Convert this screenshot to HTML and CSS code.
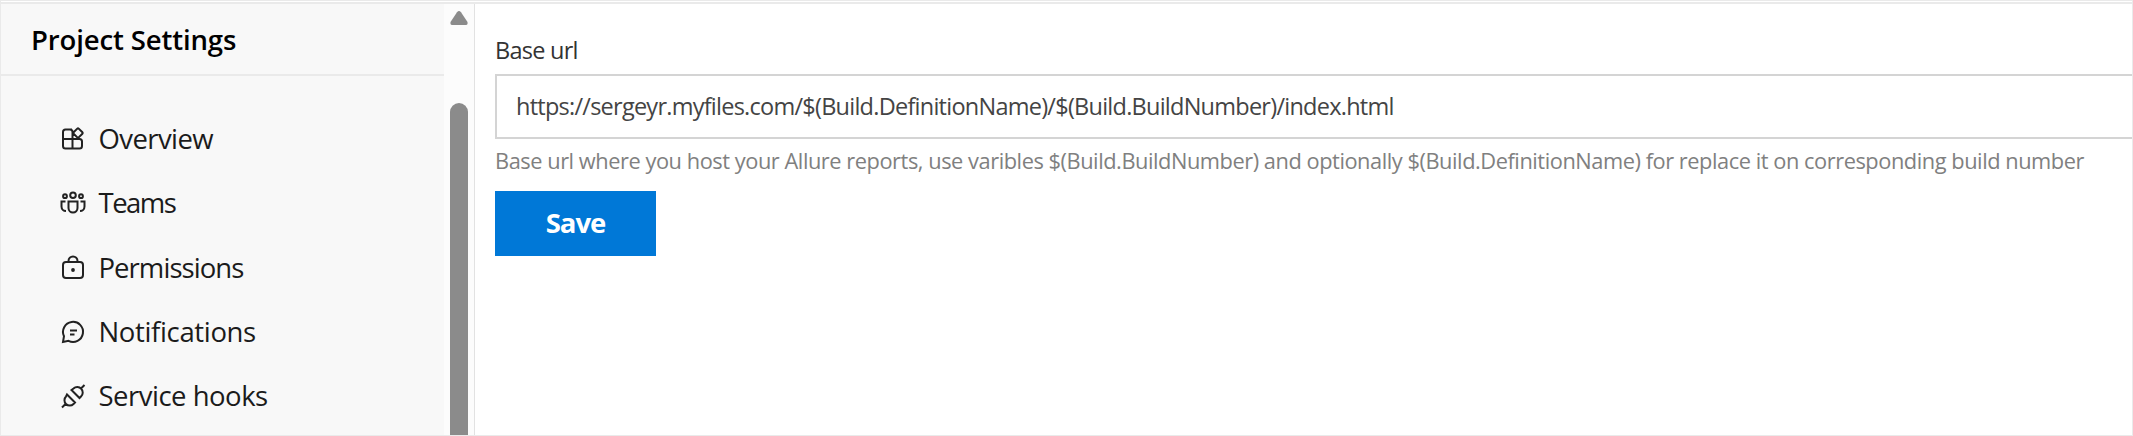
FILE: index.html
```html
<!DOCTYPE html>
<html lang="en">
<head>
<meta charset="utf-8">
<title>Project Settings</title>
<link rel="stylesheet" href="styles.css">
</head>
<body>
<div class="page">
  <div class="topline"></div>
  <div class="columns">
    <aside class="sidebar">
      <h1 class="sidebar-title"><span>Project Settings</span></h1>
      <nav class="nav">
        <a class="nav-item overview"><svg class="icon" viewBox="0 0 26 26"><path d="M12 3.5H5.500a2.500 2.500 0 0 0-2.500 2.500V20a2.500 2.500 0 0 0 2.500 2.500H19.500a2.500 2.500 0 0 0 2.500-2.500V15.500a2.500 2.500 0 0 0-2.500-2.500H3M12.500 22.500V6a2.500 2.500 0 0 0-2.500-2.500M17.300 2.600 13.600 6.300a1 1 0 0 0 0 1.400l3.700 3.700a1 1 0 0 0 1.400 0l3.700-3.700a1 1 0 0 0 0-1.400l-3.700-3.700a1 1 0 0 0-1.400 0Z"/></svg><span>Overview</span></a>
        <a class="nav-item teams"><svg class="icon" viewBox="0 0 26 26"><circle cx="13" cy="5.200" r="2.800"/><circle cx="5" cy="6.200" r="1.900"/><circle cx="21" cy="6.200" r="1.900"/><path d="M8.500 11.500H17.500V18a4.500 4.500 0 0 1-9 0ZM5.500 11.500H1.500V16.500a4.500 4.500 0 0 0 4.500 4.500M20.500 11.500H24.500V16.500a4.500 4.500 0 0 1-4.500 4.500"/></svg><span>Teams</span></a>
        <a class="nav-item permissions"><svg class="icon" viewBox="0 0 26 26"><rect x="3" y="7" width="20" height="16" rx="3"/><path d="M8.500 7V6a4.500 4.500 0 0 1 9 0V7"/><circle class="dot" cx="13" cy="15" r="1.900"/></svg><span>Permissions</span></a>
        <a class="nav-item notifications"><svg class="icon" viewBox="0 0 26 26"><path d="M3 23 4 17.200A10 10 0 1 1 8.500 21.800ZM10 11.500H17M10 15.500H14.500"/></svg><span>Notifications</span></a>
        <a class="nav-item hooks"><svg class="icon" viewBox="0 0 26 26"><path d="M2 24.500 6.500 20M20.500 6 24.500 2M7 11.500 15 19.500 13.500 21a5.200 5.200 0 0 1-7.500-7.500ZM11.500 7 19.500 15 21 13.500A5.200 5.200 0 0 0 13.500 5.500Z"/></svg><span>Service hooks</span></a>
      </nav>
    </aside>
    <div class="scrollbar">
      <svg class="scroll-up" viewBox="0 0 20 16"><path d="M8 2.200Q10 0 12 2.200L18.500 12Q19 15 17 15H3Q1 15 1.500 12Z"/></svg>
      <div class="thumb"></div>
    </div>
    <main class="content">
      <label class="label"><span>Base url</span></label>
      <div class="field"><span>https://sergeyr.myfiles.com/$(Build.DefinitionName)/$(Build.BuildNumber)/index.html</span></div>
      <p class="help"><span>Base url where you host your Allure reports, use varibles $(Build.BuildNumber) and optionally $(Build.DefinitionName) for replace it on corresponding build number</span></p>
      <button class="save"><span>Save</span></button>
    </main>
  </div>
</div>
</body>
</html>
```
FILE: styles.css
```css
* { box-sizing: border-box; }
body { margin: 0; font-family: "Open Sans", sans-serif; }
.page { display: flex; flex-direction: column; width: 2133px; height: 436px; overflow: hidden; border: 1px solid #eaeaea; background: #fff; }
.topline { flex: none; height: 3px; border-bottom: 2px solid #eaeaea; }
.columns { display: flex; flex: 1; min-height: 0; }
.sidebar { flex: none; width: 443px; background: #f8f8f8; }
.sidebar-title { margin: 0; height: 72px; padding: 17px 0 0 30px; font-size: 27.5px; line-height: 38px; font-weight: 600; letter-spacing: -0.13px; color: #000; border-bottom: 2px solid #eaeaea; }
.nav { padding: 31px 0 0 59px; }
.nav-item { display: flex; align-items: center; height: 64.3px; gap: 12.5px; font-size: 27.5px; line-height: 38px; color: #1b1b1b; }
.overview { letter-spacing: -0.6px; }
.teams { letter-spacing: -1.5px; }
.permissions { letter-spacing: -0.95px; }
.notifications { letter-spacing: -0.35px; }
.hooks { letter-spacing: -0.5px; }
.icon { width: 26px; height: 26px; fill: none; stroke: #222; stroke-width: 2; }
.dot { fill: #222; stroke: none; }
.scrollbar { flex: none; width: 31px; background: #fcfcfc; border-right: 1px solid #e2e2e2; }
.scroll-up { display: block; width: 20px; height: 16px; margin: 6px 0 0 5px; fill: #8b8b8b; }
.thumb { width: 18px; height: 400px; margin: 77px 0 0 6px; border-radius: 9px; background: #8b8b8b; }
.content { flex: 1; min-width: 0; padding: 30px 0 0 20px; white-space: nowrap; }
.label { display: block; height: 40px; font-size: 23.5px; line-height: 33px; letter-spacing: -0.75px; color: #333; }
.field { height: 65px; border: 2px solid #d4d4d4; border-right: 0; padding-left: 19px; font-size: 23.5px; line-height: 60px; letter-spacing: -0.75px; color: #444; }
.help { margin: 0; height: 52px; padding-top: 7px; font-size: 21.8px; line-height: 30px; letter-spacing: -0.45px; color: #808080; }
.save { display: block; width: 161px; height: 65px; padding: 0 0 3px; border: 0; background: #0078d7; color: #fff; font-family: "Open Sans", sans-serif; font-size: 27.5px; font-weight: 700; letter-spacing: -1px; }
```
